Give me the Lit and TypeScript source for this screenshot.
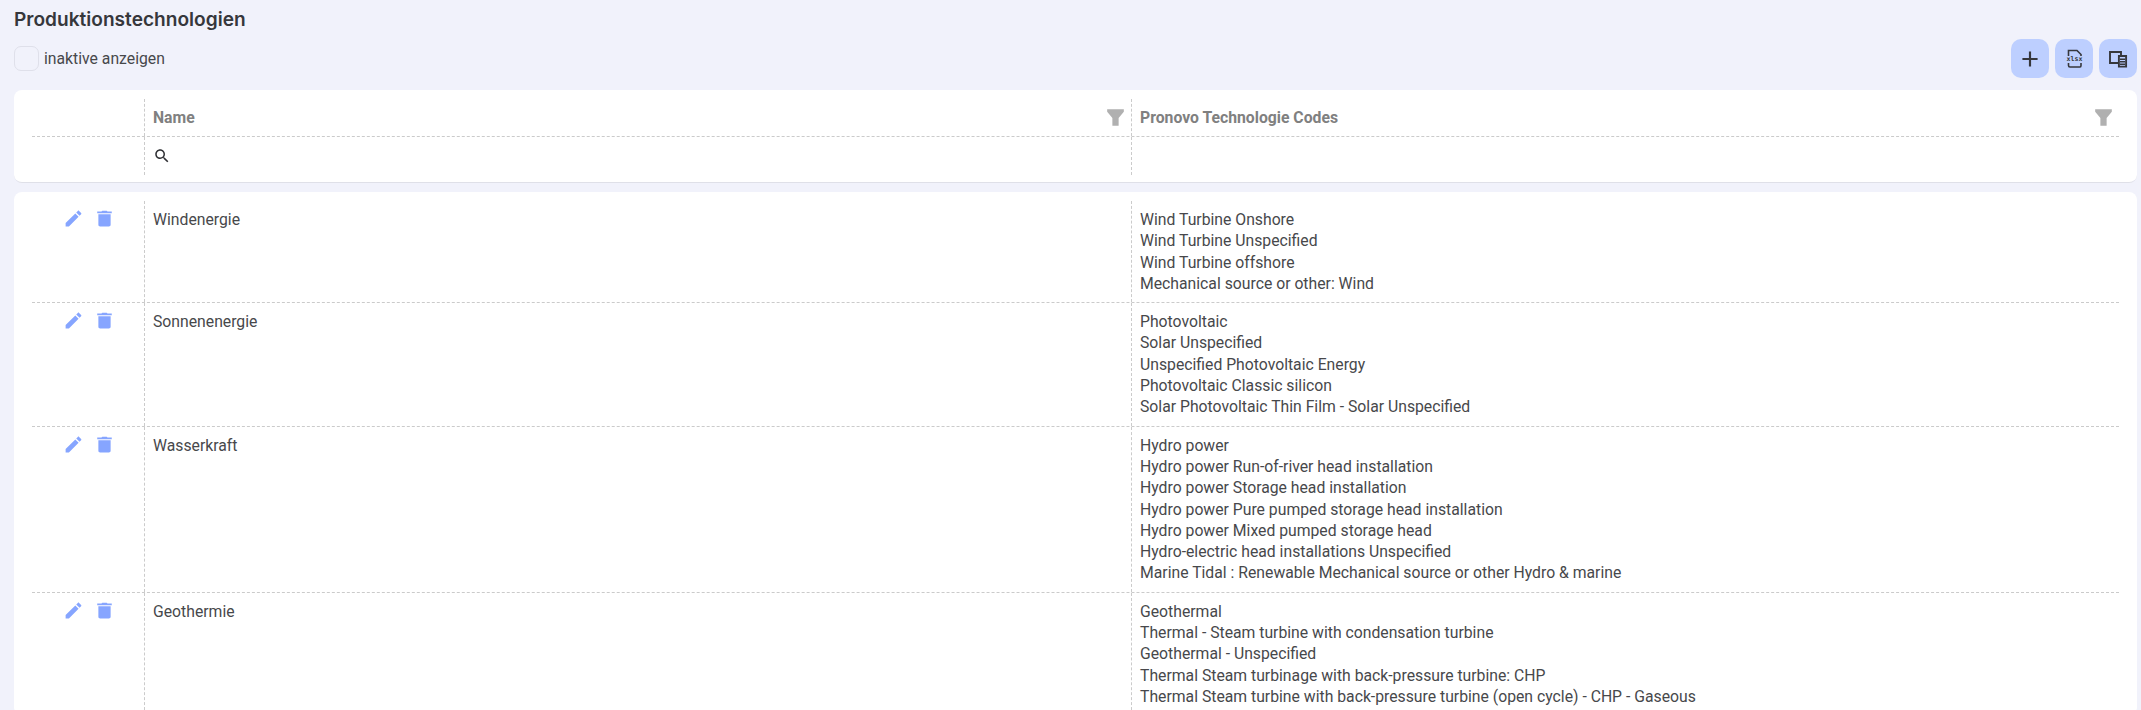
import { LitElement, html, css, svg } from 'lit';
import { customElement } from 'lit/decorators.js';

const ROWS: { name: string; codes: string[] }[] = [
  {
    name: 'Windenergie',
    codes: ['Wind Turbine Onshore', 'Wind Turbine Unspecified', 'Wind Turbine offshore', 'Mechanical source or other: Wind'],
  },
  {
    name: 'Sonnenenergie',
    codes: [
      'Photovoltaic',
      'Solar Unspecified',
      'Unspecified Photovoltaic Energy',
      'Photovoltaic Classic silicon',
      'Solar Photovoltaic Thin Film - Solar Unspecified',
    ],
  },
  {
    name: 'Wasserkraft',
    codes: [
      'Hydro power',
      'Hydro power Run-of-river head installation',
      'Hydro power Storage head installation',
      'Hydro power Pure pumped storage head installation',
      'Hydro power Mixed pumped storage head',
      'Hydro-electric head installations Unspecified',
      'Marine Tidal : Renewable Mechanical source or other Hydro & marine',
    ],
  },
  {
    name: 'Geothermie',
    codes: [
      'Geothermal',
      'Thermal - Steam turbine with condensation turbine',
      'Geothermal - Unspecified',
      'Thermal Steam turbinage with back-pressure turbine: CHP',
      'Thermal Steam turbine with back-pressure turbine (open cycle) - CHP - Gaseous',
    ],
  },
];

const icon = (d: string, size = 24) =>
  html`<svg width=${size} height=${size} viewBox="0 0 24 24" fill="currentColor">${svg`<path d=${d}></path>`}</svg>`;

const PLUS = 'M19 13h-6v6h-2v-6H5v-2h6V5h2v6h6v2z';
const EDIT =
  'M3 17.25V21h3.75L17.81 9.94l-3.75-3.75L3 17.25zM20.71 7.04c.39-.39.39-1.02 0-1.41l-2.34-2.34c-.39-.39-1.02-.39-1.41 0l-1.83 1.83 3.75 3.75 1.83-1.83z';
const TRASH = 'M5 19c0 1.1.9 2 2 2h10c1.1 0 2-.9 2-2V7H5v12zM20.3 4h-4.8l-1-1h-5l-1 1H3.7v2h16.6V4z';
const FILTER = 'M4 4h16v2.5L15 12.5V20H9v-7.5L4 6.5z';
const SEARCH =
  'M15.5 14h-.79l-.28-.27C15.41 12.59 16 11.11 16 9.5 16 5.91 13.09 3 9.5 3S3 5.91 3 9.5 5.91 16 9.5 16c1.61 0 3.09-.59 4.23-1.57l.27.28v.79l5 4.99L20.49 19l-4.99-5zm-6 0C7.01 14 5 11.99 5 9.5S7.01 5 9.5 5 14 7.01 14 9.5 11.99 14 9.5 14z';

@customElement('app-root')
export class AppRoot extends LitElement {
  static styles = css`
    :host {
      display: block;
      height: 710px;
      overflow: hidden;
      box-sizing: border-box;
      padding: 8px 4px 0 14px;
      background: #f1f2fb;
      font-family: Roboto, 'Liberation Sans', sans-serif;
      font-size: 15.75px;
      color: #47484b;
    }

    h1 {
      margin: 0;
      font-family: Inter, Roboto, sans-serif;
      font-size: 19.1px;
      line-height: 22px;
      font-weight: 600;
      color: #36373b;
    }

    /* === Toolbar === */
    .toolbar {
      display: flex;
      align-items: flex-start;
      justify-content: space-between;
      height: 60px;
    }
    .check {
      display: flex;
      align-items: center;
      gap: 5px;
      margin-top: 16px;
    }
    .box {
      width: 25px;
      height: 25px;
      box-sizing: border-box;
      border: 1px solid #dfe0ea;
      border-radius: 7px;
    }
    .actions {
      display: flex;
      gap: 6px;
      margin-top: 9px;
    }
    .btn {
      width: 38px;
      height: 39px;
      border-radius: 10px;
      background: #bdcfff;
      color: #36373c;
      display: flex;
      align-items: center;
      justify-content: center;
    }

    /* === Cards and grid === */
    .card {
      background: #fff;
      border-radius: 8px;
      padding: 9px 18px 0;
    }
    .head {
      height: 93px;
      box-sizing: border-box;
      margin-bottom: 9px;
      border-bottom: 1px solid #dfe0e8;
    }
    .row {
      display: grid;
      grid-template-columns: 112px 987px 1fr;
    }
    .row + .row {
      border-top: 1px dashed #cbcbcb;
    }
    .cell {
      padding: 0 8px;
      border-left: 1px dashed #cbcbcb;
    }
    .cell.first {
      border-left: 0;
    }

    .titles {
      height: 37px;
    }
    .titles .cell {
      display: flex;
      align-items: center;
      justify-content: space-between;
      font-weight: 700;
      color: #808080;
      padding-right: 3px;
    }
    .filter {
      color: #b0b0b0;
      display: flex;
    }
    .search {
      height: 38px;
    }
    .search .cell {
      display: flex;
      align-items: center;
      color: #2f3034;
    }

    /* === Data rows === */
    .row.data .cell {
      padding-top: 8px;
      padding-bottom: 8px;
      line-height: 21.3px;
    }
    .row.data .row-actions {
      display: flex;
      justify-content: flex-end;
      gap: 10px;
      color: #86a5ff;
      padding-right: 29px;
      padding-top: 7px;
    }
    .row-actions svg {
      display: block;
    }
  `;

  render() {
    return html`
      <h1>Produktionstechnologien</h1>
      <div class="toolbar">
        <label class="check"><span class="box"></span>inaktive anzeigen</label>
        <div class="actions">
          <div class="btn">${icon(PLUS, 26)}</div>
          <div class="btn">
            <svg width="24" height="24" viewBox="0 0 24 24" fill="none" stroke="currentColor" stroke-width="1.6">
              <path d="M6.5 9V3.5h8.5l4 4V9M6.5 16v2.5c0 1 .5 1.5 1.5 1.5h10c.6 0 1-.5 1-1.5V16"></path>
              <text x="12.5" y="14.2" text-anchor="middle" font-family="DejaVu Sans Mono" font-size="6.6" font-weight="700" fill="currentColor" stroke="none">xlsx</text>
            </svg>
          </div>
          <div class="btn">
            <svg width="24" height="24" viewBox="0 0 24 24" fill="none" stroke="currentColor" stroke-width="1.9">
              <path d="M15 8V5H4v11h8"></path>
              <path d="M12.9 9h7.2v10.6h-7.2z"></path>
              <path d="M14 12.2h5M14 14.8h5M14 17.2h5" stroke-width="1.4"></path>
            </svg>
          </div>
        </div>
      </div>

      <div class="card head">
        <div class="row titles">
          <div class="cell first"></div>
          <div class="cell">Name<span class="filter">${icon(FILTER, 25)}</span></div>
          <div class="cell">Pronovo Technologie Codes<span class="filter">${icon(FILTER, 25)}</span></div>
        </div>
        <div class="row search">
          <div class="cell first"></div>
          <div class="cell">${icon(SEARCH, 18)}</div>
          <div class="cell"></div>
        </div>
      </div>

      <div class="card body">
        ${ROWS.map(
          (r) => html`
            <div class="row data">
              <div class="cell first row-actions">${icon(EDIT, 21)}${icon(TRASH, 21)}</div>
              <div class="cell">${r.name}</div>
              <div class="cell">${r.codes.map((c) => html`<div>${c}</div>`)}</div>
            </div>
          `,
        )}
      </div>
    `;
  }
}
